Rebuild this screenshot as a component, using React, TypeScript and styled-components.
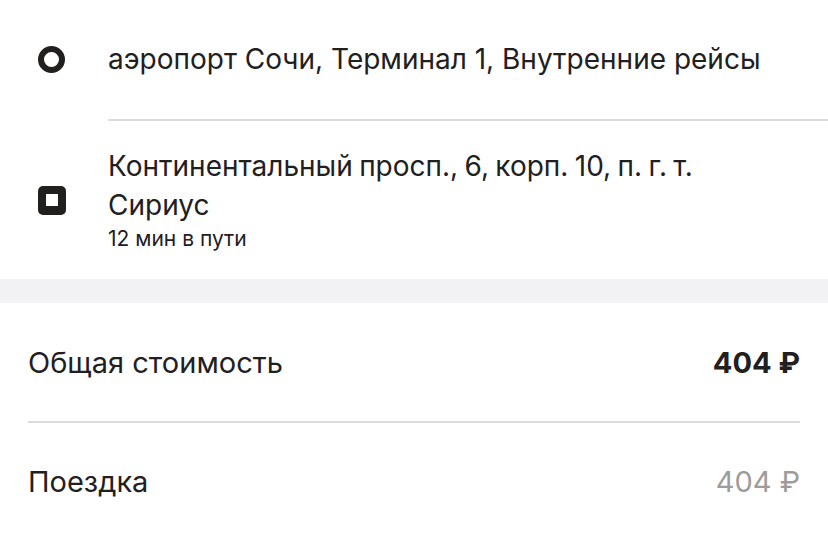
import React from "react";
import styled, { createGlobalStyle } from "styled-components";

const Global = createGlobalStyle`
  html, body { margin: 0; padding: 0; background: #fff; }
  body { font-family: "Inter", "Noto Sans", sans-serif; color: #21201f; }
`;

const Page = styled.div`
  width: 828px;
  display: flex;
  flex-direction: column;
`;

const Route = styled.section`
  display: flex;
  flex-direction: column;
`;

const Point = styled.div<{ $tall?: boolean }>`
  display: flex;
  align-items: center;
  padding-left: 38px;
  min-height: ${(p) => (p.$tall ? "158px" : "119px")};
  box-sizing: border-box;
`;

const IconSlot = styled.div`
  width: 70px;
  flex: none;
  display: flex;
  align-items: center;
`;

const Ring = styled.div`
  width: 27px;
  height: 27px;
  border-radius: 50%;
  border: 6.5px solid #21201f;
  box-sizing: border-box;
`;

const Square = styled.div`
  width: 28px;
  height: 29px;
  border-radius: 5px;
  background: #21201f;
  display: flex;
  align-items: center;
  justify-content: center;
  &::after {
    content: "";
    width: 12px;
    height: 12px;
    background: #fff;
  }
`;

const PointText = styled.div`
  display: flex;
  flex-direction: column;
`;

const Address = styled.div<{ $tight?: boolean }>`
  font-size: 28px;
  line-height: 39px;
  word-spacing: ${(p) => (p.$tight ? "-1.5px" : "0")};
`;

const Sub = styled.div`
  font-size: 21px;
  line-height: 28px;
`;

const RouteDivider = styled.div`
  height: 2px;
  margin-left: 108px;
  background: #dcdcdc;
`;

const Band = styled.div`
  height: 24px;
  background: #f2f2f4;
`;

const PriceList = styled.section`
  display: flex;
  flex-direction: column;
  padding: 0 28px;
`;

const PriceRow = styled.div<{ $h: number }>`
  display: flex;
  align-items: center;
  justify-content: space-between;
  height: ${(p) => p.$h}px;
`;

const Label = styled.span`
  font-size: 29px;
`;

const Amount = styled.span<{ $muted?: boolean }>`
  font-size: 29px;
  font-weight: ${(p) => (p.$muted ? 400 : 700)};
  color: ${(p) => (p.$muted ? "#9e9c9a" : "#21201f")};
`;

const PriceDivider = styled.div`
  height: 2px;
  background: #dcdcdc;
`;

export default function App() {
  return (
    <Page>
      <Global />
      <Route>
        <Point>
          <IconSlot>
            <Ring />
          </IconSlot>
          <Address>аэропорт Сочи, Терминал 1, Внутренние рейсы</Address>
        </Point>
        <RouteDivider />
        <Point $tall>
          <IconSlot>
            <Square />
          </IconSlot>
          <PointText>
            <Address $tight>
              Континентальный просп., 6, корп. 10, п. г. т.
              <br />
              Сириус
            </Address>
            <Sub>12 мин в пути</Sub>
          </PointText>
        </Point>
      </Route>
      <Band />
      <PriceList>
        <PriceRow $h={118}>
          <Label>Общая стоимость</Label>
          <Amount>404 ₽</Amount>
        </PriceRow>
        <PriceDivider />
        <PriceRow $h={116}>
          <Label>Поездка</Label>
          <Amount $muted>404 ₽</Amount>
        </PriceRow>
      </PriceList>
    </Page>
  );
}
